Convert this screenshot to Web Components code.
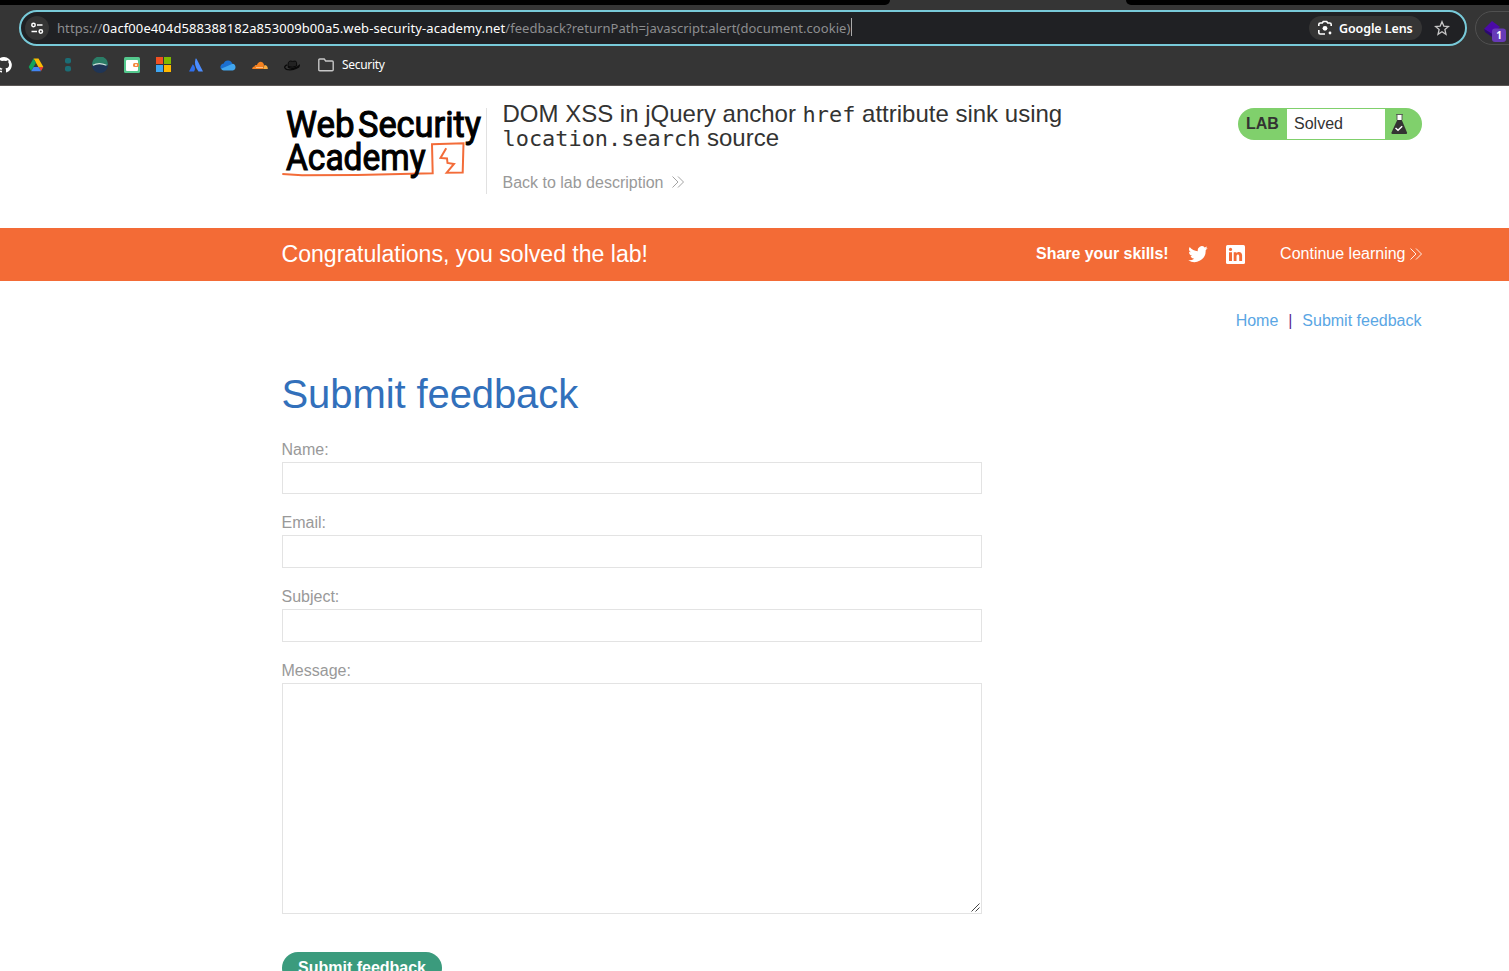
<!DOCTYPE html>
<html lang="en"><head><meta charset="utf-8"><title>DOM XSS in jQuery anchor href attribute sink</title>
<style>html,body{margin:0;height:971px;overflow:hidden;background:#fff}body{font-family:"Liberation Sans",Arial,sans-serif;font-size:16px;color:#333332}</style></head>
<body>
<browser-bar></browser-bar>
<lab-header></lab-header>
<lab-banner></lab-banner>
<lab-page></lab-page>
<script>
const define=(name,html)=>{const t=document.createElement('template');t.innerHTML=html;
customElements.define(name,class extends HTMLElement{constructor(){super();this.attachShadow({mode:'open'}).append(t.content.cloneNode(true));}});};

define('double-chevron',`<style>:host{display:inline-block;width:12px;height:12px}svg{display:block}</style>
<svg width="12" height="12" viewBox="0 0 12 12" fill="none" stroke="currentColor" stroke-width=".9"><path d="M.5.5 6 6 .5 11.5M6 .5 11.5 6 6 11.5"/></svg>`);

define('bookmark-icons',`<style>:host{display:block}div{display:flex;gap:16px;margin-left:-4px;height:16px}svg{display:block;width:16px;height:16px;flex:none}</style>
<div>
<svg viewBox="0 0 16 16"><path fill="#fff" d="M8 0a8 8 0 0 0-2.500 15.600c.4.1.5-.2.5-.4v-1.500c-2.200.5-2.700-.9-2.700-.9-.4-.9-.9-1.200-.9-1.200-.7-.5.1-.5.1-.5.8.1 1.200.8 1.200.8.7 1.200 1.900.9 2.300.7.1-.5.3-.9.5-1.100-1.800-.2-3.600-.9-3.600-4 0-.9.3-1.600.8-2.100-.1-.2-.4-1 .1-2.100 0 0 .7-.2 2.200.8a7.500 7.500 0 0 1 4 0c1.500-1 2.200-.8 2.200-.8.4 1.100.1 1.900.1 2.100.5.6.8 1.300.8 2.100 0 3.100-1.900 3.700-3.700 3.900.3.300.6.8.6 1.500v2.200c0 .2.1.5.600.4A8 8 0 0 0 8 0z"/></svg>
<svg viewBox="0 0 16 16"><path fill="#fbbc04" d="M5.500 1.500h5l4.900 8.500h-5z"/><path fill="#ea4335" d="M10.500 10h4.900L13 14.300z"/><path fill="#11a35b" d="M5.500 1.500 8 5.800 3.200 14 .7 10z"/><path fill="#4285f4" d="M5.600 10h5l2.400 4.300H3.200z"/></svg>
<svg viewBox="0 0 16 16" fill="#1b6d75"><rect x="5" y="1" width="6" height="5.500" rx="2"/><rect x="5" y="9" width="6" height="5.500" rx="2"/></svg>
<svg viewBox="0 0 16 16"><circle cx="8" cy="8" r="8" fill="#1f3556"/><path fill="#2b7d66" d="M.2 8.500a7.900 7.900 0 1 1 15.600 0Q8 4 .2 8.500z"/><path d="M1 8.200Q7 5 14.500 8.200" fill="none" stroke="#cfe8dc" stroke-width="1.200"/></svg>
<svg viewBox="0 0 16 16"><rect width="16" height="16" rx="1.500" fill="#54c88d"/><rect x="2" y="3" width="12" height="11" rx="1" fill="#fff"/><rect x="9" y="6" width="6" height="4" rx="1.500" fill="#f58b42"/><rect x="11" y="7.300" width="2" height="1.500" fill="#fff"/></svg>
<svg viewBox="0 0 16 16"><path fill="#f25022" d="M0 0h7v7H0z"/><path fill="#7fba00" d="M8 0h7v7H8z"/><path fill="#3fa6f2" d="M0 8h7v7H0z"/><path fill="#ffb900" d="M8 8h7v7H8z"/></svg>
<svg viewBox="0 0 16 16"><path fill="#4c8dff" d="M7.500 1.800q.5-.8 1 0L15 14.600H10.500Q5.500 8.500 7.500 1.800z"/><path fill="#2f6fec" d="M4.800 7.200Q8.500 10.500 6 14.600H1z"/></svg>
<svg viewBox="0 0 16 16"><path fill="#1b6fd0" d="M3.700 6.500a4.500 4.500 0 0 1 8.600.5L8 11l-7 1a3.600 3.600 0 0 1 2.700-5.500z"/><path fill="#41a6ef" d="M1 11.800 7.500 9l5-2.200a3.400 3.400 0 0 1 .3 6.700H3.700A3.500 3.500 0 0 1 1 11.800z"/></svg>
<svg viewBox="0 0 16 16"><path fill="#f48120" d="M.2 12c0-1.700 1-2.600 2.300-2.500.4-1.500 1.600-1.700 2.400-1.200C6 3.700 11 3.500 12 7.700L11.500 12z"/><path fill="#faad3f" d="M12.500 8c2 0 3.300 1.500 3.300 4h-4.500z"/><path d="M4 10.500h7" stroke="#ffd9ae" stroke-width=".7"/></svg>
<svg viewBox="0 0 16 16" fill="none" stroke="#0a0a0a" stroke-width="1"><path fill="#222" d="M4 9.500q-.2-5.500 2.500-5.500l2.200.4L11.500 4Q13 4.500 12.700 9 8.500 11 4 9.500z"/><path d="M3 7.800c-4 1.700-2.500 5 3 5 5 0 9.500-2.600 9.300-4.300-2.800 3.300-9.300 3.500-11.300 1.500" stroke-width="1.300"/></svg>
</div>`);

define('browser-bar',`<style>
:host{display:block;height:86px;background:#353535;box-sizing:border-box;border-bottom:1px solid #5b5755;font-family:"Noto Sans","Open Sans",sans-serif;overflow:hidden}
.tabs{height:5px;display:flex;justify-content:space-between}.tabs i{background:#000;width:890px;border-bottom-right-radius:6px}.tabs i+i{width:383px;border-radius:0 0 0 6px}
.row{display:flex;height:36px;margin-top:5px;padding-left:19px;gap:8px}
.omni{flex:none;box-sizing:border-box;width:1448px;height:36px;border:2px solid #78cad9;border-radius:18px;background:#202124;display:flex;align-items:center;padding:0 15px 0 4px}
.site{width:24px;height:24px;border-radius:50%;background:#353535;display:grid;place-items:center;margin-right:8px}
.url{white-space:pre;font-size:13px;line-height:20px;color:#8d8e90;display:flex;flex:1}
.url b{font-weight:400;color:#fff}.url u{width:1px;height:18px;background:#aaa}
.a{letter-spacing:.09px}.b{letter-spacing:.09px}.c{letter-spacing:.035px;padding-right:.8px}
.lens{height:24px;width:113px;border-radius:12px;background:#353535;color:#fff;font-weight:600;font-size:12.500px;display:flex;align-items:center;box-sizing:border-box;padding-left:8px;gap:6px;margin-right:12px;white-space:nowrap;letter-spacing:-.1px}
.ext{flex:none;box-sizing:border-box;width:60px;height:34px;margin-top:1px;border:1px solid #505050;border-radius:17px;padding:8px 0 0 7px}
svg{display:block;flex:none}
.marks{display:flex;align-items:center;margin-top:11px;height:16px;color:#fff;font-size:12px}.marks svg{margin:0 8px 0 18px}.marks span{letter-spacing:-.3px;margin-top:-1px}
</style>
<div class="tabs"><i></i><i></i></div>
<div class="row"><div class="omni"><div class="site"><svg width="14" height="14" viewBox="0 0 14 14" fill="none" stroke="#fff" stroke-width="1.500"><circle cx="3.500" cy="4" r="1.700"/><path d="M7 4h5.500M1.500 10.500H7"/><circle cx="10.800" cy="10.500" r="1.700"/></svg></div>
<div class="url"><span class="a">https://</span><b class="b">0acf00e404d588388182a853009b00a5.web-security-academy.net</b><span class="c">/feedback?returnPath=javascript:alert(document.cookie)</span><u></u></div>
<div class="lens"><svg width="16" height="16" viewBox="0 0 16 16"><path d="M1.800 6V4.500q0-1.500 1.500-1.500h2l1-1.500h3.400l1 1.500h2q1.500 0 1.500 1.500V6M1.800 10v2.500q0 1.500 1.500 1.500H8" fill="none" stroke="#fff" stroke-width="1.600"/><circle cx="8" cy="8.300" r="2.400" fill="#fff"/><circle cx="13" cy="13" r="1.400" fill="#fff"/></svg><span>Google Lens</span></div>
<svg width="16" height="16" viewBox="0 0 16 16" fill="none" stroke="#c7c7c7" stroke-width="1.300"><path d="m8 1.700 1.800 4.400 4.700.4-3.600 3.100 1.100 4.700L8 11.800l-4 2.500 1.100-4.700-3.600-3.100 4.700-.4z"/></svg></div>
<div class="ext"><svg width="24" height="22" viewBox="0 0 24 22"><path d="M1 9 9 1l8 6-8 7z" fill="#4b0aa8"/><path d="m1 9 8 5v3L2 12z" fill="#2b0873"/><rect x="9" y="8.500" width="14" height="13.500" rx="3" fill="#673ab7"/><text x="16" y="19" text-anchor="middle" fill="#fff" font-size="10" font-weight="700">1</text></svg></div></div>
<div class="marks"><bookmark-icons></bookmark-icons><svg width="16" height="14" viewBox="0 0 16 14" fill="none" stroke="#c7c7c7" stroke-width="1.400"><path d="M.8 2q0-1 1-1h4.400l1.500 2h6.500q1 0 1 1v7.800q0 1-1 1H1.800q-1 0-1-1z"/></svg><span>Security</span></div>`);

define('academy-logo',`<style>:host{display:block;width:204px;height:86px}svg{display:block;overflow:visible}text{font-family:"Roboto","Noto Sans",sans-serif;font-size:37.500px;font-weight:400;stroke:#000;stroke-width:1.100}</style>
<svg width="204" height="86" viewBox="0 0 204 86"><g fill="none" stroke="#f36c39" stroke-width="2"><path d="M.3 66 20 67.200l55-.3 75.700-1.700-.7-29 31.500-.9-.8 29.200-16 .2 7.300-8.700-6.500-1-.5-4.500-6.500-.5 5.700-9.700"/></g>
<text x="4" y="28.700" textLength="68.500" lengthAdjust="spacingAndGlyphs">Web</text><text x="76" y="28.700" textLength="123" lengthAdjust="spacingAndGlyphs">Security</text><text x="4" y="61.500" textLength="139.500" lengthAdjust="spacingAndGlyphs">Academy</text></svg>`);

define('lab-status',`<style>:host{display:flex;box-sizing:border-box;width:184px;height:32px;border-radius:16px;background:#80d06c;padding:1px 0;line-height:30px}b{width:49px;padding-left:8px;box-sizing:border-box}span{width:98px;box-sizing:border-box;background:#fff;padding-left:7px}svg{margin:5px 0 0 5px}</style>
<b>LAB</b><span>Solved</span><svg width="18" height="21" viewBox="0 0 18 21"><path d="M7 1h5v6H7z" fill="#fff"/><path d="M6 .5h7M7 1v5M12 1v5" stroke="#555" stroke-width=".9"/><path d="M7.200 6h4.600l5.200 12.500q.4 1.500-1 1.500H2.500q-1.400 0-1-1.500z" fill="#333332"/><path d="m5.500 14 2.500 2.200 4.200-4" fill="none" stroke="#fff" stroke-width="1.500"/></svg>`);

define('lab-header',`<style>:host{display:flex;height:142px;padding:22px 87px 0 282px;box-sizing:border-box;align-items:flex-start}
academy-logo{border-right:1px solid #e1e1e1}.t{margin:-6px 0 0 15.500px;flex:1}h2{margin:0;font-weight:400;font-size:24px;line-height:24px;white-space:nowrap}code{font-family:"DejaVu Sans Mono",monospace;font-size:21.920px;line-height:20px}.back{display:flex;align-items:center;gap:8.500px;margin-top:23px;line-height:20px;color:#999}.back double-chevron{margin-top:-2px}
</style><academy-logo></academy-logo><div class="t"><h2>DOM XSS in jQuery anchor <code>href</code> attribute sink using<br><code>location.search</code> source</h2><div class="back"><span>Back to lab description</span><double-chevron></double-chevron></div></div><lab-status></lab-status>`);

define('lab-banner',`<style>:host{display:flex;align-items:center;height:53px;background:#f36b36;color:#fff;box-sizing:border-box;padding:0 87.500px 2px 281.500px;white-space:nowrap}
.c{font-size:23.100px;flex:1;margin-top:2px;letter-spacing:-.02px}b{letter-spacing:-.05px}svg{display:block}.tw{margin:1px 0 0 19px}.li{margin:1px 35px 0 18.500px}double-chevron{margin:1px 0 0 4px}
</style><span class="c">Congratulations, you solved the lab!</span><b>Share your skills!</b>
<svg class="tw" width="20" height="20" viewBox="0 0 24 24" fill="#fff"><path d="M23.600 4.900a9.500 9.500 0 0 1-2.700.7 4.800 4.800 0 0 0 2.100-2.600 9.500 9.500 0 0 1-3 1.200 4.800 4.800 0 0 0-8.200 4.400A13.500 13.500 0 0 1 2 3.600a4.800 4.800 0 0 0 1.500 6.400 4.700 4.700 0 0 1-2.200-.6v.1a4.800 4.800 0 0 0 3.800 4.700 4.800 4.800 0 0 1-2.100.1 4.800 4.800 0 0 0 4.400 3.300A9.600 9.600 0 0 1 .3 19.500a13.500 13.500 0 0 0 20.900-12z"/></svg>
<svg class="li" width="19" height="19" viewBox="0 0 19 19"><rect width="19" height="19" rx="1.500" fill="#fff"/><g fill="#f36b36"><circle cx="4.500" cy="4.400" r="1.600"/><path d="M3 7.200h3V16H3zM7.700 7.200h2.800v1.200c1.200-2 5.600-2 5.600 2.200V16h-2.900v-4.700c0-2.700-2.700-2.400-2.700 0V16H7.700z"/></g></svg>
<span>Continue learning</span><double-chevron></double-chevron>`);

define('form-field',`<style>:host{display:block;color:#999;line-height:20px}.box{box-sizing:border-box;margin-top:2px;width:700px;height:var(--field-height,33px);border:1px solid #e3e3e3;background:#fff;display:flex;align-items:flex-end;justify-content:flex-end}.label{margin-left:-.5px}</style>
<div class="label"><slot></slot></div><div class="box"><slot name="grip"></slot></div>`);

define('lab-page',`<style>:host{display:block;padding:30px 87px 0 282px}nav{display:flex;justify-content:flex-end;line-height:20px;color:#5aa6e4;margin-right:.5px}nav i{font-style:normal;color:#5c2a91;width:24px;text-align:center}
h1{margin:39px 0 0 -.5px;font-size:40px;line-height:48px;font-weight:400;color:#3270bb;letter-spacing:-.09px}form-field{margin-top:19px}.n{--field-height:32px;margin-top:22px}.m{--field-height:231px}svg{display:block;margin:0 1px 1px}
.btn{width:160px;height:32px;border-radius:16px;background:#3b9b7d;color:#fff;font-weight:700;margin-top:38px;text-align:center;line-height:31px}</style>
<nav><span>Home</span><i>|</i><span>Submit feedback</span></nav><h1>Submit feedback</h1>
<form-field class="n">Name:</form-field><form-field>Email:</form-field><form-field>Subject:</form-field><form-field class="m">Message:<svg slot="grip" width="9" height="9" viewBox="0 0 9 9" stroke="#444" stroke-width="1"><path d="M.5 8.500 8.500.5M4.500 8.500l4-4"/></svg></form-field>
<div class="btn">Submit feedback</div>`);
</script></body></html>
